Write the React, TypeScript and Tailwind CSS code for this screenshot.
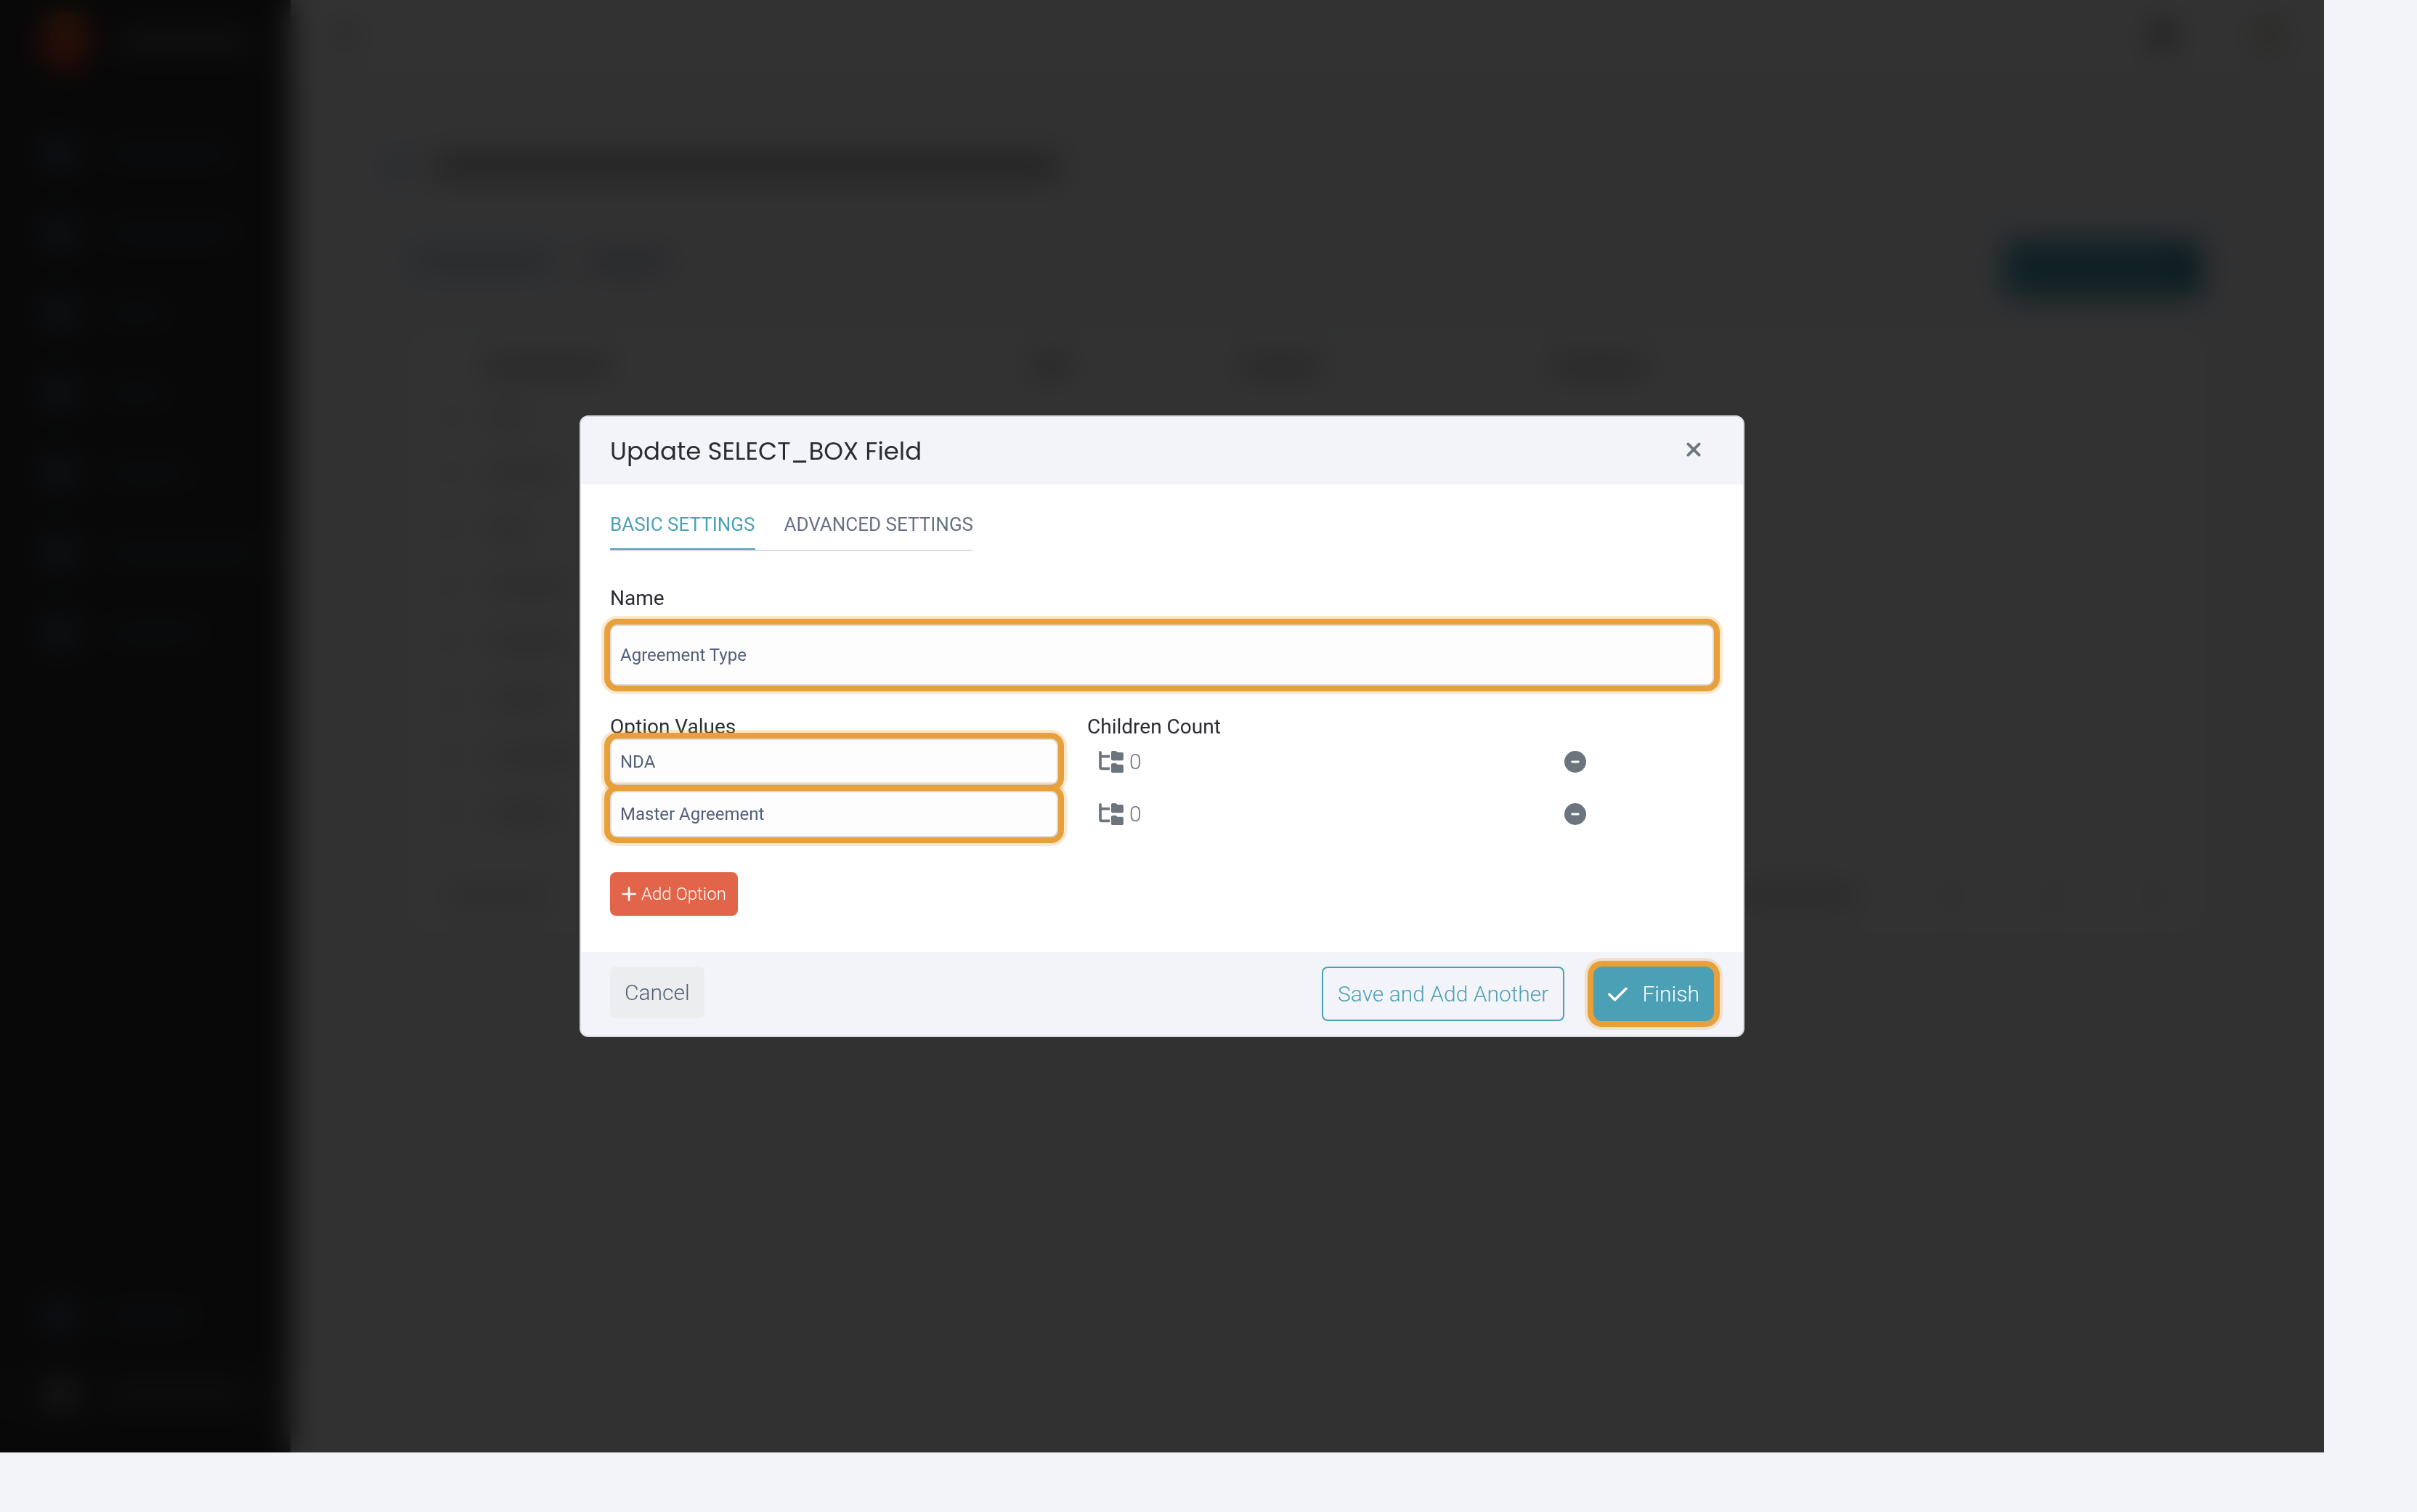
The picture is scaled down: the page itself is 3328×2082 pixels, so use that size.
import React, { useState } from "react";
import { FaFolderTree, FaCircleMinus } from "react-icons/fa6";

const HIGHLIGHT =
    "relative shadow-[0_0_0_8px_#e8a03b,0_0_0_12px_rgba(232,160,59,0.25)]";

const FIELD =
    "w-full rounded-[10px] border-2 border-[#dadce2] bg-[#fdfdfd] px-3 text-2xl text-[#525f77] outline-none";

const LABEL = "block pt-0.5 text-[28px] leading-8 text-[#2b2c33]";

const NAV_WIDTHS = ["w-42", "w-44", "w-20", "w-20", "w-28", "w-52", "w-32"];
const ROW_WIDTHS = ["w-12", "w-24", "w-14", "w-28", "w-28", "w-24", "w-32", "w-24"];

const CloseIcon = () => (
    <svg viewBox="0 0 20 20" className="size-5" fill="none" stroke="currentColor" strokeWidth="3.8" strokeLinecap="round">
        <path d="M2.4 2.4l15.2 15.2M17.6 2.4l-15.2 15.2" />
    </svg>
);

const PlusIcon = () => (
    <svg viewBox="0 0 20 20" className="size-5" fill="none" stroke="currentColor" strokeWidth="2.6" strokeLinecap="round">
        <path d="M10 1.5v17M1.5 10h17" />
    </svg>
);

const CheckIcon = () => (
    <svg viewBox="0 0 27 20" className="h-5 w-[27px]" fill="none" stroke="currentColor" strokeWidth="3.4" strokeLinecap="round" strokeLinejoin="round">
        <path d="M2 10.2l7.5 7.6L25 2.2" />
    </svg>
);

/* Sidebar of the page behind the dialog */
const Sidebar = () => (
    <aside className="flex w-[400px] shrink-0 flex-col bg-[#2a2a2a] pb-11">
        <div className="flex h-[156px] items-start gap-10 pt-4 pl-[58px]">
            <div className="h-20 w-16 rounded-full bg-gradient-to-b from-[#c4622a] to-[#e02a2a]" />
            <div className="mt-7 h-7 w-46 bg-[#585858]" />
        </div>
        <nav className="flex flex-col">
            {NAV_WIDTHS.map((width, i) => (
                <div key={i} className="flex h-[110px] items-center gap-11 pl-[60px]">
                    <div className="size-11 rounded-lg bg-[#4c5a74]" />
                    <div className={`h-4 bg-[#424c60] ${width}`} />
                </div>
            ))}
        </nav>
        <div className="mt-auto mb-4 flex h-[110px] items-center gap-11 pl-[60px]">
            <div className="size-11 rounded-lg bg-[#4c5a74]" />
            <div className="h-4 w-30 bg-[#424c60]" />
        </div>
        <div className="flex h-[72px] items-center gap-12 bg-[#303030] pl-[66px]">
            <div className="size-9 rounded-full bg-[#a0a0a0]" />
            <div className="h-4 w-46 bg-[#5a5a5a]" />
        </div>
    </aside>
);

/* Field list of the page behind the dialog */
const FieldList = () => (
    <div className="flex min-w-0 flex-1 flex-col">
        <header className="flex h-24 items-center justify-between bg-[#fafafc] pr-12 pl-[60px]">
            <div className="h-6 w-8 bg-[#c0c0c0]" />
            <div className="flex items-center gap-25">
                <div className="size-9 rounded-full bg-[#888888]" />
                <div className="size-14 rounded-full bg-[#dedacb]" />
            </div>
        </header>
        <div className="flex h-[266px] items-center gap-8 pl-[134px]">
            <div className="h-5 w-8 bg-[#b4c2d8]" />
            <div className="h-8 w-[860px] bg-[#a8a8a8]" />
        </div>
        <div className="flex h-[93px] items-start gap-12 pr-[168px] pl-[168px]">
            <div className="-mt-3 h-5 w-48 bg-[#a4c2d0]" />
            <div className="-mt-3 h-5 w-28 bg-[#b4bac6]" />
            <div className="-mt-8 ml-auto flex h-20 w-[272px] items-center justify-end rounded-lg bg-[#4ca0b5] pr-4">
                <div className="h-12 w-5 bg-[#2a707e]" />
            </div>
        </div>
        <div className="mr-[168px] ml-[164px] rounded-xl bg-[#fafafc] pb-7">
            <div className="grid h-[98px] grid-cols-[756px_286px_430px_1fr] items-center pl-[102px]">
                <div className="h-5 w-44 bg-[#b0b0b0]" />
                <div className="h-5 w-12 bg-[#a0a0a0]" />
                <div className="h-5 w-28 bg-[#b0b0b0]" />
                <div className="h-5 w-32 bg-[#b0b0b0]" />
            </div>
            {ROW_WIDTHS.map((width, i) => (
                <div key={i} className="flex h-[78px] items-start gap-12 pt-3 pl-[50px]">
                    <div className="h-4 w-3 bg-[#b8b8b8]" />
                    <div className={`h-4 bg-[#c4c4c4] ${width}`} />
                </div>
            ))}
            <div className="mt-9 flex h-10 items-center gap-30 pr-14 pl-[50px]">
                <div className="mr-auto h-4 w-36 bg-[#c8c8c8]" />
                <div className="h-5 w-42 bg-[#c0c0c0]" />
                <div className="size-5 bg-[#d6d6d6]" />
                <div className="size-5 bg-[#d6d6d6]" />
                <div className="size-5 bg-[#d6d6d6]" />
            </div>
        </div>
    </div>
);

const UpdateFieldDialog = () => {
    const [name, setName] = useState("Agreement Type");
    const [options, setOptions] = useState(["NDA", "Master Agreement"]);

    const changeOption = (index: number, value: string) =>
        setOptions(options.map((option, i) => (i === index ? value : option)));

    return (
        <div
            role="dialog"
            aria-modal="true"
            aria-labelledby="dialog-title"
            className="w-full max-w-[1604px] overflow-hidden rounded-xl border-2 border-[#dadce2] bg-white"
        >
            <header className="flex h-[93px] items-center justify-between bg-[#f3f4f9] px-10">
                <h2 id="dialog-title" className="pt-0.5 font-[Poppins,Lato,sans-serif] text-[34px] text-[#2b2c33]">
                    Update SELECT_BOX Field
                </h2>
                <button type="button" aria-label="Close" className="px-[18px] pt-2 pb-3 text-[#6c757d]">
                    <CloseIcon />
                </button>
            </header>

            <div className="px-10 pt-[35px] pb-[50px]">
                <div role="tablist" className="flex w-fit gap-10 border-b-2 border-[#dadce2] text-[26px] leading-10">
                    <button type="button" role="tab" aria-selected="true" className="border-b-2 border-[#4ca0b5] pb-[13px] text-[#4ca0b5]">
                        BASIC SETTINGS
                    </button>
                    <button type="button" role="tab" aria-selected="false" className="border-b-2 border-transparent pb-[13px] text-[#677087]">
                        ADVANCED SETTINGS
                    </button>
                </div>

                <label htmlFor="field-name" className={`${LABEL} mt-[47px] mb-5`}>Name</label>
                <input
                    id="field-name"
                    className={`${FIELD} ${HIGHLIGHT} block h-21`}
                    value={name}
                    onChange={(e) => setName(e.target.value)}
                />

                <div className="mt-[39px] grid grid-cols-[617fr_617fr_206fr] gap-x-10">
                    <span className={LABEL} id="option-values">Option Values</span>
                    <span className={LABEL}>Children Count</span>
                </div>
                <div className="flex flex-col gap-2">
                    {options.map((option, i) => (
                        <div key={i} className="grid grid-cols-[617fr_617fr_206fr] items-center gap-x-10">
                            <input
                                aria-labelledby="option-values"
                                className={`${FIELD} ${HIGHLIGHT} h-16`}
                                value={option}
                                onChange={(e) => changeOption(i, e.target.value)}
                            />
                            <div className="flex items-center gap-2 pl-4 text-[30px] leading-10 font-light text-[#6c757d]">
                                <FaFolderTree className="h-[30px] w-[34px]" />
                                0
                            </div>
                            <button type="button" aria-label="Remove option" className="w-fit text-[#6c757d]">
                                <FaCircleMinus className="size-[30px]" />
                            </button>
                        </div>
                    ))}
                </div>

                <button
                    type="button"
                    className="mt-12 flex h-15 items-center gap-[7px] rounded-lg bg-[#e2644a] px-4 text-2xl font-light text-white"
                    onClick={() => setOptions([...options, ""])}
                >
                    <PlusIcon />
                    Add Option
                </button>
            </div>

            <footer className="flex items-start bg-[#f3f4f9] px-10 py-5 text-[30px] font-light">
                <button type="button" className="h-[71px] rounded-lg bg-[#ecedee] px-5 text-[#525f77]">
                    Cancel
                </button>
                <button type="button" className="ml-auto h-[75px] rounded-lg border-2 border-[#4ca0b5] px-5 text-[#4ca0b5]">
                    Save and Add Another
                </button>
                <button type="button" className={`${HIGHLIGHT} ml-10 flex h-[75px] items-center gap-5 rounded-xl bg-[#4ca0b5] px-5 text-white`}>
                    <CheckIcon />
                    Finish
                </button>
            </footer>
        </div>
    );
};

const App = () => {
    return (
        <div className="flex min-h-screen bg-[#f3f4f9] pr-32 pb-[82px] font-[Roboto,sans-serif]">
            <main className="relative flex flex-1 overflow-hidden bg-[#f3f4f9]">
                <Sidebar />
                <FieldList />

                {/* Backdrop */}
                <div className="absolute inset-0 flex items-center justify-center bg-black/80 backdrop-blur-[20px]">
                    <UpdateFieldDialog />
                </div>
            </main>
        </div>
    );
};

export default App;
